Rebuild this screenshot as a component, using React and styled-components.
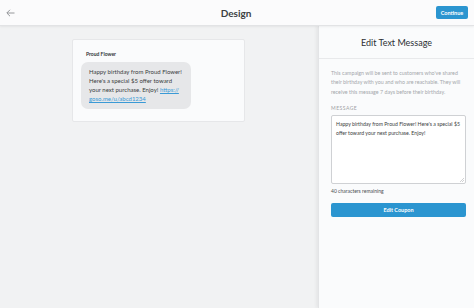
import styled, { createGlobalStyle } from "styled-components";

const GlobalStyle = createGlobalStyle`
  html, body {
    margin: 0;
    padding: 0;
  }
  body {
    font-family: Lato, "Liberation Sans", sans-serif;
    background: #f1f2f3;
  }
`;

const Page = styled.div`
  width: 474px;
  height: 308px;
  display: flex;
  flex-direction: column;
  overflow: hidden;
`;

const TopBar = styled.header`
  height: 25px;
  flex-shrink: 0;
  display: flex;
  align-items: center;
  justify-content: space-between;
  padding: 0 6px 0 6px;
  background: #fbfbfc;
  border-bottom: 1px solid #e2e3e5;
  box-shadow: 0 1px 2px rgba(0, 0, 0, 0.06);
  position: relative;
  z-index: 2;
`;

const BackButton = styled.div`
  width: 30px;
  display: flex;
  align-items: center;
  color: #8a8d91;
`;

const Title = styled.h1`
  margin: 0;
  font-size: 10px;
  font-weight: 700;
  color: #3c3f43;
`;

const PrimaryButton = styled.button`
  border: none;
  border-radius: 2px;
  background: #2b95d0;
  color: #fff;
  font-family: inherit;
  font-weight: 700;
  font-size: 5.5px;
  height: ${(p) => p.h || "13px"};
  width: ${(p) => p.w || "auto"};
  padding: 0 6px;
  display: flex;
  align-items: center;
  justify-content: center;
`;

const Main = styled.div`
  flex: 1;
  display: flex;
  min-height: 0;
`;

const Canvas = styled.div`
  width: 318px;
  flex-shrink: 0;
  padding: 13px 0 0 72px;
  box-sizing: border-box;
`;

const Card = styled.div`
  width: 173px;
  height: 83px;
  box-sizing: border-box;
  background: #fafbfc;
  border: 1px solid #e6e7e9;
  border-radius: 2px;
  padding: 11px 0 0 8px;
`;

const Sender = styled.div`
  font-size: 5px;
  font-weight: 700;
  color: #2f3236;
  margin-left: 5px;
  margin-bottom: 5px;
`;

const Bubble = styled.div`
  width: 110px;
  height: 47px;
  box-sizing: border-box;
  background: #e6e7e9;
  border-radius: 7px;
  padding: 5px 6px 0 8px;
  font-size: 6px;
  line-height: 9px;
  color: #3b3e42;
`;

const Link = styled.span`
  color: #3a9ad6;
  text-decoration: underline;
`;

const Panel = styled.aside`
  flex: 1;
  background: #fafbfc;
  border-left: 1px solid #e3e4e6;
  box-shadow: -2px 0 3px rgba(0, 0, 0, 0.05);
  display: flex;
  flex-direction: column;
`;

const PanelHeader = styled.div`
  height: 32px;
  flex-shrink: 0;
  display: flex;
  align-items: center;
  justify-content: center;
  border-bottom: 1px solid #e8e9eb;
  font-size: 9px;
  color: #2c2f33;
`;

const PanelBody = styled.div`
  padding: 10px 8px 0 12px;
  display: flex;
  flex-direction: column;
`;

const Help = styled.p`
  margin: 0;
  font-size: 5.3px;
  line-height: 9.3px;
  color: #a4a7ab;
`;

const Label = styled.div`
  margin-top: 8px;
  font-size: 5px;
  letter-spacing: 0.5px;
  color: #9ea1a5;
`;

const TextBox = styled.div`
  margin-top: 4px;
  height: 69px;
  box-sizing: border-box;
  background: #fff;
  border: 1px solid #cfd1d4;
  border-radius: 2px;
  padding: 4px 4px;
  font-size: 5.2px;
  line-height: 9px;
  color: #3b3e42;
  position: relative;
`;

const Grip = styled.svg`
  position: absolute;
  right: 1px;
  bottom: 1px;
`;

const Counter = styled.div`
  margin-top: 4px;
  font-size: 5px;
  color: #4a4d51;
`;

const BlockButton = styled(PrimaryButton)`
  margin-top: 9px;
  width: 100%;
`;

export default function App() {
  return (
    <Page>
      <GlobalStyle />
      <TopBar>
        <BackButton>
          <svg width="9" height="8" viewBox="0 0 9 8" fill="none" stroke="#8a8d91" strokeWidth="0.9">
            <path d="M8.5 4H1M4 0.8L0.8 4L4 7.2" />
          </svg>
        </BackButton>
        <Title>Design</Title>
        <PrimaryButton h="13px" w="32px">Continue</PrimaryButton>
      </TopBar>
      <Main>
        <Canvas>
          <Card>
            <Sender>Proud Flower</Sender>
            <Bubble>
              Happy birthday from Proud Flower! Here's a special $5 offer toward your next purchase. Enjoy!{" "}
              <Link>https://</Link>
              <wbr />
              <Link>goso.me/u/abcd1234</Link>
            </Bubble>
          </Card>
        </Canvas>
        <Panel>
          <PanelHeader>Edit Text Message</PanelHeader>
          <PanelBody>
            <Help>
              This campaign will be sent to customers who've shared their birthday with you and who are reachable. They will receive this message 7 days before their birthday.
            </Help>
            <Label>MESSAGE</Label>
            <TextBox>
              Happy birthday from Proud Flower! Here's a special $5 offer toward your next purchase. Enjoy!
              <Grip width="4" height="4" viewBox="0 0 4 4" stroke="#a0a3a7" strokeWidth="0.5">
                <path d="M4 0L0 4M4 2L2 4" />
              </Grip>
            </TextBox>
            <Counter>40 characters remaining</Counter>
            <BlockButton h="14px">Edit Coupon</BlockButton>
          </PanelBody>
        </Panel>
      </Main>
    </Page>
  );
}
